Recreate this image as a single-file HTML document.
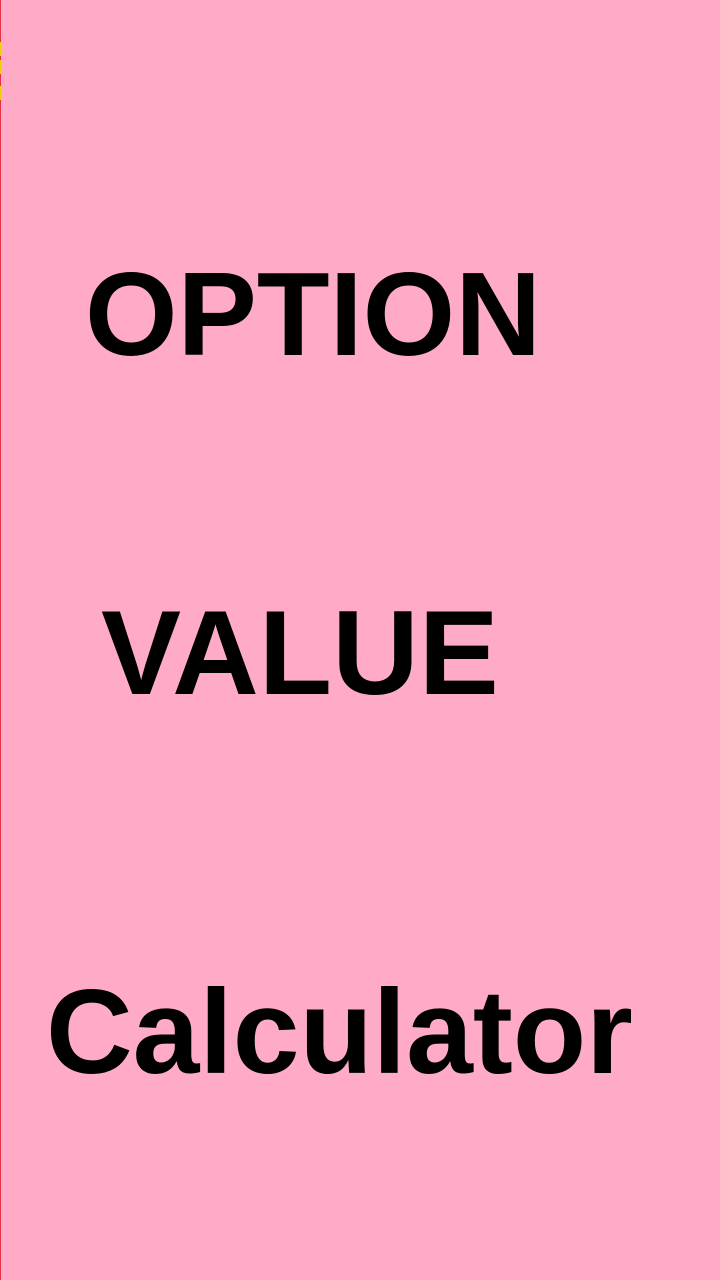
<!DOCTYPE html>
<html><head><style>
html,body{margin:0;padding:0}
body{width:720px;height:1280px;background:#ffabc8;position:relative;overflow:hidden;font-family:"Liberation Sans",Arial,sans-serif;font-weight:bold;color:#000}
.t{position:absolute;line-height:1;white-space:nowrap}
.edge{position:absolute;left:0;top:0;width:1px;height:1280px;background:#e8304a}
.y{position:absolute;left:0;width:1px;background:#f0d000}
</style></head><body>
<div class="edge"></div>
<div class="y" style="top:42px;height:14px"></div>
<div class="y" style="top:60px;height:14px"></div>
<div class="y" style="top:86px;height:14px"></div>
<div class="t" style="left:85px;top:255px;font-size:119px">OPTION</div>
<div class="t" style="left:101px;top:593px;font-size:120px">VALUE</div>
<div class="t" style="left:46px;top:972px;font-size:120px">Calculator</div>
</body></html>
